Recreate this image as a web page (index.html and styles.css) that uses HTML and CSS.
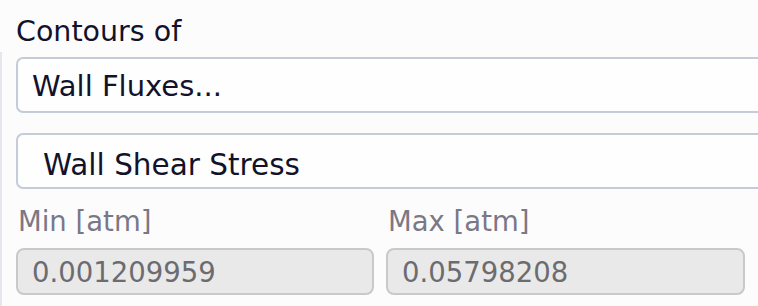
FILE: index.html
```html
<!DOCTYPE html>
<html lang="en">

<head>
    <meta charset="UTF-8">
    <title>Contours</title>
    <link rel="stylesheet" href="styles.css">
</head>

<body>
    <div class="page">
        <div class="title">Contours of</div>
        <div class="panel">
            <div class="combo combo-category">Wall Fluxes...</div>
            <div class="combo combo-field">Wall Shear Stress</div>
            <div class="range">
                <div class="range-col">
                    <div class="range-label">Min [atm]</div>
                    <div class="range-input">0.001209959</div>
                </div>
                <div class="range-col">
                    <div class="range-label">Max [atm]</div>
                    <div class="range-input">0.05798208</div>
                </div>
            </div>
        </div>
    </div>
</body>

</html>
```

FILE: styles.css
```css
html {
    background: #fcfcfc;
}
body {
    margin: 0;
    padding: 0;
    width: 758px;
    height: 306px;
    overflow: hidden;
    font-family: "DejaVu Sans", sans-serif;
}
.page {
    padding-top: 15px;
}
.title {
    margin-left: 16px;
    font-size: 28.5px;
    line-height: 34px;
    color: #12122a;
}
.panel {
    margin-top: 3px;
    padding: 5px 0 0 14px;
    border-left: 2px solid #e4e7ec;
    height: 249px;
}
/* the combos run on past the right edge, so no right border shows */
.combo {
    border: 2px solid #c4ccd7;
    border-right: none;
    border-radius: 7px 0 0 7px;
    background: #fefefe;
    color: #12122a;
}
.combo-category {
    padding-left: 14px;
    height: 52px;
    font-size: 29px;
    line-height: 54px;
}
.combo-field {
    margin-top: 20px;
    padding-left: 25px;
    height: 52px;
    font-size: 29.5px;
    line-height: 60px;
}
.range {
    display: grid;
    grid-template-columns: 358px 359px;
    column-gap: 12px;
    margin-top: 16px;
}
.range-label {
    font-size: 27.5px;
    line-height: 32px;
    color: #7b7886;
    padding-left: 2px;
}
.range-input {
    margin-top: 11px;
    height: 43px;
    border: 2px solid #c9c9c9;
    border-radius: 8px;
    background: #e9e9e9;
    padding-left: 14px;
    font-size: 27.5px;
    line-height: 45px;
    color: #6c6c70;
}
```
